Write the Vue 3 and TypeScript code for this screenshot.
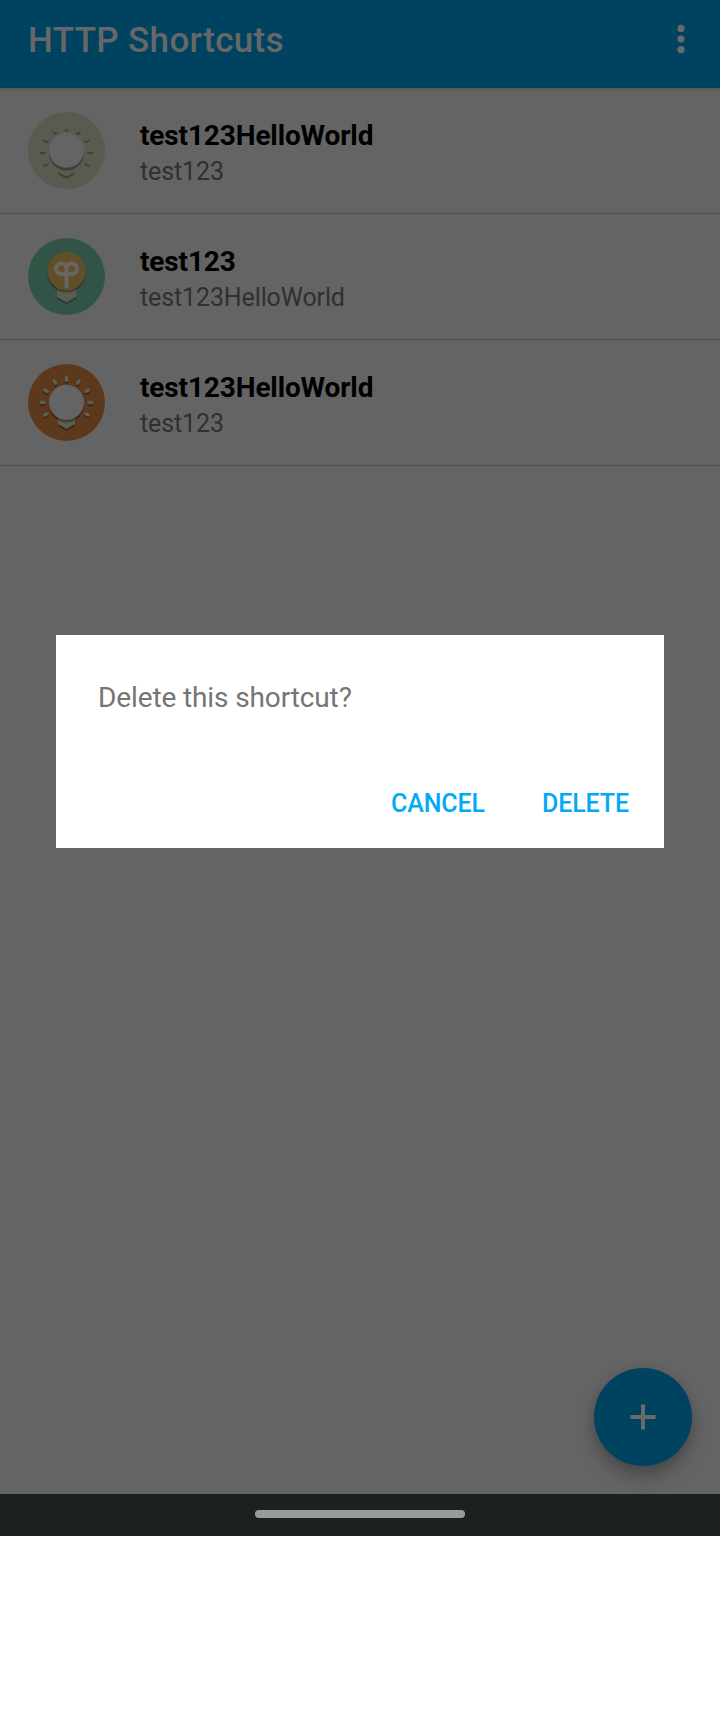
<script setup lang="ts">
type IconKind = 'pale' | 'plant' | 'orange'

interface Shortcut {
  id: number
  name: string
  description: string
  icon: IconKind
}

const shortcuts: Shortcut[] = [
  { id: 1, name: 'test123HelloWorld', description: 'test123', icon: 'pale' },
  { id: 2, name: 'test123', description: 'test123HelloWorld', icon: 'plant' },
  { id: 3, name: 'test123HelloWorld', description: 'test123', icon: 'orange' },
]

const rayAngles: number[] = [-120, -90, -60, -30, 0, 30, 60, 90, 120]
</script>

<template>
  <div class="screen">
    <header class="bar">
      <h1 class="title">HTTP Shortcuts</h1>
      <svg class="more" width="8" height="30" viewBox="0 0 8 30">
        <circle cx="4" cy="4.4" r="3.6" />
        <circle cx="4" cy="15" r="3.6" />
        <circle cx="4" cy="25.6" r="3.6" />
      </svg>
    </header>

    <main class="content">
      <ul class="list">
        <li v-for="item in shortcuts" :key="item.id" class="row">
          <svg class="icon" :class="item.icon" width="77" height="77" viewBox="0 0 77 77">
            <circle class="disc" cx="38.5" cy="38.5" r="38.5" />
            <template v-if="item.icon === 'plant'">
              <path class="shade" d="M29 50H48V61L38.5 66.3L29 61Z" />
              <path class="base" d="M29 48H48V59L38.5 64.5L29 59Z" />
              <circle class="shade" cx="38.5" cy="35.4" r="19.2" />
              <circle class="bulb" cx="38.5" cy="33.2" r="19.2" />
              <path
                class="sprout"
                d="M38.5 48.2V31C38.5 27.5 36.3 25.6 33.4 25.6C30.2 25.6 28 27.9 28 30.7C28 34 30.6 36.1 34.5 36.1H42.5C46.4 36.1 49 34 49 30.7C49 27.9 46.8 25.6 43.6 25.6C40.7 25.6 38.5 27.5 38.5 31"
              />
            </template>
            <template v-else>
              <g class="shade">
                <rect
                  v-for="angle in rayAngles"
                  :key="angle"
                  x="36.8"
                  y="11.8"
                  width="3.4"
                  height="6"
                  rx="1.6"
                  :transform="`translate(0 2) rotate(${angle} 38.5 38.5)`"
                />
                <path d="M30 53H47V62L38.5 67L30 62Z" />
              </g>
              <g class="base">
                <rect
                  v-for="angle in rayAngles"
                  :key="angle"
                  x="36.8"
                  y="11.8"
                  width="3.4"
                  height="6"
                  rx="1.6"
                  :transform="`rotate(${angle} 38.5 38.5)`"
                />
                <path d="M30 53H47V60L38.5 64.8L30 60Z" />
              </g>
              <circle class="shade" cx="38.5" cy="41" r="17.5" />
              <circle class="bulb" cx="38.5" cy="38.3" r="17.5" />
            </template>
          </svg>
          <div class="texts">
            <div class="name">{{ item.name }}</div>
            <div class="description">{{ item.description }}</div>
          </div>
        </li>
      </ul>

      <button class="fab" aria-label="Add">
        <svg width="26" height="26" viewBox="0 0 26 26"><path d="M13 .5V25.5M.5 13H25.5" /></svg>
      </button>
    </main>

    <footer class="nav"><span class="pill"></span></footer>

    <section class="dialog" role="dialog">
      <p class="message">Delete this shortcut?</p>
      <div class="actions">
        <button class="action cancel">CANCEL</button>
        <button class="action delete">DELETE</button>
      </div>
    </section>
  </div>
</template>

<style>
body {
  margin: 0;
  background: #fff;
}
</style>

<style scoped>
.screen {
  position: relative;
  display: flex;
  flex-direction: column;
  width: 720px;
  height: 1536px;
  background: #646464;
  font-family: Roboto, 'Liberation Sans', sans-serif;
  overflow: hidden;
}
.bar {
  display: flex;
  align-items: flex-start;
  justify-content: space-between;
  box-sizing: border-box;
  flex: 0 0 88px;
  padding: 20px 35px 0 28px;
  background: #004361;
  box-shadow: 0 1px 3px rgba(0, 0, 0, 0.2);
}
.title {
  margin: 0;
  font-size: 35px;
  line-height: 41px;
  font-weight: 500;
  letter-spacing: 0.35px;
  color: #676767;
  white-space: nowrap;
}
.more {
  margin-top: 4px;
  fill: #6a6a6a;
}
.content {
  flex: 1;
  display: flex;
  flex-direction: column;
  justify-content: space-between;
}
.list {
  margin: 0;
  padding: 0;
  list-style: none;
}
.row {
  display: flex;
  align-items: flex-start;
  box-sizing: border-box;
  height: 126px;
  padding: 24px 28px 0;
  border-bottom: 1px solid #505050;
}
.icon {
  flex: none;
  margin-right: 35px;
}
.texts {
  margin-top: 7px;
  white-space: nowrap;
}
.name {
  font-size: 28px;
  line-height: 34px;
  font-weight: 700;
  letter-spacing: -0.13px;
  color: #000;
}
.description {
  margin-top: 3px;
  font-size: 25px;
  line-height: 32px;
  letter-spacing: -0.12px;
  color: #303030;
}
.pale .disc,
.pale .base {
  fill: #595b50;
}
.shade {
  fill: rgba(0, 0, 0, 0.3);
}
.bulb {
  fill: #646464;
}
.plant .disc {
  fill: #315446;
}
.plant .base {
  fill: #5b5c51;
}
.plant .bulb {
  fill: #624e29;
}
.sprout {
  fill: none;
  stroke: #69665f;
  stroke-width: 4;
  stroke-linecap: round;
}
.orange .disc {
  fill: #5c381d;
}
.orange .base {
  fill: #5e5f54;
}
.fab {
  display: flex;
  align-items: center;
  justify-content: center;
  align-self: flex-end;
  width: 98px;
  height: 98px;
  margin: 0 28px 28px 0;
  padding: 0;
  border: 0;
  border-radius: 50%;
  background: #004361;
  box-shadow: 0 10px 18px rgba(0, 0, 0, 0.26), 0 1px 10px rgba(0, 0, 0, 0.08);
}
.fab path {
  stroke: #6a6a6a;
  stroke-width: 4;
}
.nav {
  display: flex;
  justify-content: center;
  flex: 0 0 42px;
  background: #1c2020;
}
.pill {
  width: 210px;
  height: 8px;
  margin-top: 16px;
  border-radius: 4px;
  background: #999c9a;
}
.dialog {
  position: absolute;
  top: 635px;
  left: 56px;
  display: flex;
  flex-direction: column;
  justify-content: space-between;
  box-sizing: border-box;
  width: 608px;
  height: 213px;
  padding: 46px 35px 27px 42px;
  background: #fff;
}
.message {
  margin: 0;
  font-size: 28px;
  line-height: 34px;
  letter-spacing: -0.12px;
  color: #757575;
}
.actions {
  display: flex;
  justify-content: flex-end;
  gap: 57px;
}
.action {
  padding: 0;
  border: 0;
  background: none;
  font-family: inherit;
  font-size: 25px;
  line-height: 34px;
  font-weight: 500;
  letter-spacing: -0.1px;
  color: #03a9f4;
}
</style>
